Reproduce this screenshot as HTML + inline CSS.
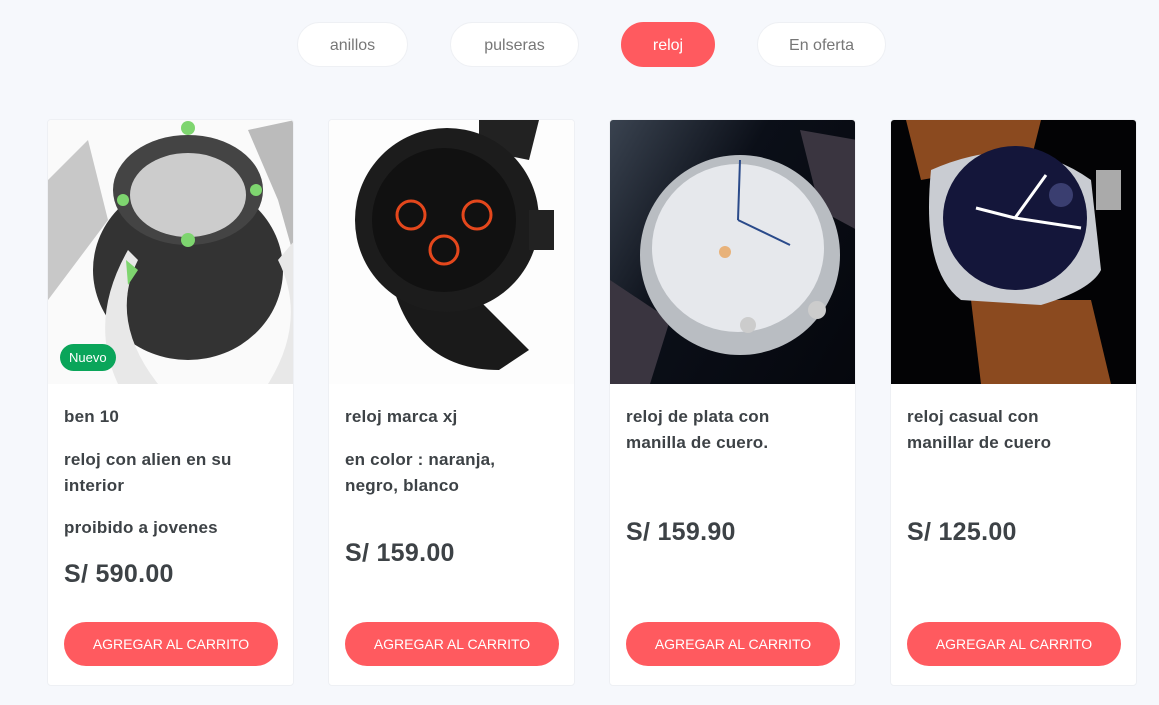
<!DOCTYPE html>
<html><head><meta charset="utf-8"><style>
*{margin:0;padding:0;box-sizing:border-box}
body{width:1159px;height:705px;background:#f6f8fc;font-family:"Liberation Sans",sans-serif;position:relative;overflow:hidden}
.tab{position:absolute;top:22px;height:45px;border-radius:23px;background:#fff;border:1px solid #eef0f4;color:#777;font-size:16px;line-height:45px;text-align:center}
.tab.act{background:#ff5a5f;color:#fff;border-color:#ff5a5f}
.card{position:absolute;top:119px;width:247px;height:567px;background:#fff;border:1px solid #eef0f4;border-radius:4px;overflow:hidden}
.img{position:absolute;left:0;top:0;width:247px;height:264px;overflow:hidden}
.t{position:absolute;left:16px;width:215px;font-size:17px;font-weight:bold;color:#3d4246;line-height:26px;letter-spacing:0.2px}
.p{position:absolute;left:16px;font-size:25px;font-weight:bold;color:#3d4246;letter-spacing:0.3px}
.btn{position:absolute;left:16px;top:502px;width:214px;height:44px;border-radius:22px;background:#ff5a5f;color:#fff;font-size:14px;text-align:center;line-height:44px}
.badge{position:absolute;left:12px;top:224px;background:#0aa55a;color:#fff;font-size:13px;border-radius:15px;padding:6px 9px}
</style></head><body>
<div class="tab" style="left:297px;width:111px">anillos</div>
<div class="tab" style="left:450px;width:129px">pulseras</div>
<div class="tab act" style="left:621px;width:94px">reloj</div>
<div class="tab" style="left:757px;width:129px">En oferta</div>

<div class="card" style="left:47px">
<div class="img" style="background:#fafafa"><svg width="247" height="264">
<path d="M0 60 L40 20 L60 100 L0 180Z" fill="#c8c8c8"/><path d="M247 0 L200 10 L230 80 L247 140Z" fill="#bbb"/>
<ellipse cx="140" cy="150" rx="95" ry="90" fill="#333"/><ellipse cx="140" cy="70" rx="75" ry="55" fill="#444"/><ellipse cx="140" cy="75" rx="58" ry="42" fill="#ccc"/>
<path d="M90 140 Q60 200 110 264 L70 264 Q40 200 80 130Z" fill="#e8e8e8"/><path d="M230 140 Q260 200 220 264 L250 264 L247 120Z" fill="#e8e8e8"/>
<circle cx="140" cy="8" r="7" fill="#7ed56f"/><circle cx="208" cy="70" r="6" fill="#7ed56f"/><circle cx="140" cy="120" r="7" fill="#7ed56f"/><circle cx="75" cy="80" r="6" fill="#7ed56f"/><path d="M78 140 L90 150 L80 165Z" fill="#7ed56f"/></svg>
<div class="badge">Nuevo</div></div>
<div class="t" style="top:284px">ben 10</div>
<div class="t" style="top:327px">reloj con alien en su<br>interior</div>
<div class="t" style="top:395px">proibido a jovenes</div>
<div class="p" style="top:440px">S/ 590.00</div>
<div class="btn">AGREGAR AL CARRITO</div></div>

<div class="card" style="left:328px">
<div class="img" style="background:#fdfdfd"><svg width="247" height="264">
<path d="M60 150 Q80 250 170 250 L200 230 L120 150Z" fill="#1a1a1a"/><path d="M150 0 L210 0 L200 40 L150 30Z" fill="#222"/>
<circle cx="118" cy="100" r="92" fill="#1c1c1c"/><circle cx="115" cy="100" r="72" fill="#111"/>
<circle cx="82" cy="95" r="14" fill="none" stroke="#e4471c" stroke-width="3"/><circle cx="148" cy="95" r="14" fill="none" stroke="#e4471c" stroke-width="3"/><circle cx="115" cy="130" r="14" fill="none" stroke="#e4471c" stroke-width="3"/>
<rect x="200" y="90" width="25" height="40" fill="#222"/></svg></div>
<div class="t" style="top:284px">reloj marca xj</div>
<div class="t" style="top:327px">en color : naranja,<br>negro, blanco</div>
<div class="p" style="top:419px">S/ 159.00</div>
<div class="btn">AGREGAR AL CARRITO</div></div>

<div class="card" style="left:609px">
<div class="img" style="background:linear-gradient(120deg,#3a4350 0%,#0b0f18 40%,#05070d 100%)"><svg width="247" height="264">
<path d="M0 160 L60 200 L40 264 L0 264Z" fill="#3a3540"/><path d="M190 10 L247 20 L247 110 L210 90Z" fill="#3a3540"/>
<ellipse cx="130" cy="135" rx="100" ry="100" fill="#b9bdc2"/><ellipse cx="128" cy="128" rx="86" ry="84" fill="#e6e8ec"/>
<circle cx="115" cy="132" r="6" fill="#e8b27a"/><path d="M128 100 L130 40 M128 100 L180 125" stroke="#2a4a8a" stroke-width="2"/>
<circle cx="207" cy="190" r="9" fill="#ccc"/><circle cx="138" cy="205" r="8" fill="#ccc"/></svg></div>
<div class="t" style="top:284px">reloj de plata con<br>manilla de cuero.</div>
<div class="p" style="top:398px">S/ 159.90</div>
<div class="btn">AGREGAR AL CARRITO</div></div>

<div class="card" style="left:890px">
<div class="img" style="background:#030305"><svg width="247" height="264">
<path d="M15 0 L150 0 L140 40 L30 60Z" fill="#8b4a1f"/><path d="M80 180 L200 180 L220 264 L90 264Z" fill="#8b4a1f"/>
<path d="M40 50 Q130 10 200 60 L210 150 Q200 170 150 185 L70 180 Q30 150 40 50Z" fill="#c9ccd2"/>
<rect x="205" y="50" width="25" height="40" fill="#aaa"/>
<circle cx="124" cy="98" r="72" fill="#14163a"/><circle cx="170" cy="75" r="12" fill="#3a3e70"/>
<path d="M124 98 L155 55 M124 98 L190 108 M124 98 L85 88" stroke="#fff" stroke-width="3"/></svg></div>
<div class="t" style="top:284px">reloj casual con<br>manillar de cuero</div>
<div class="p" style="top:398px">S/ 125.00</div>
<div class="btn">AGREGAR AL CARRITO</div></div>
</body></html>
